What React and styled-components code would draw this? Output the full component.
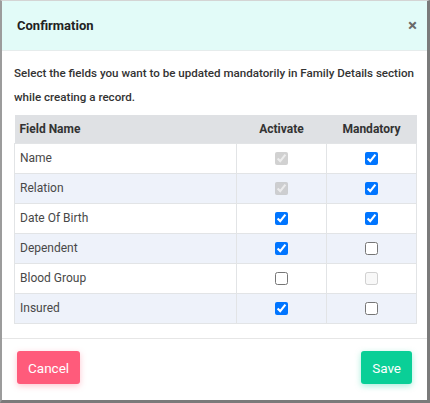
import React from 'react';
import styled, { createGlobalStyle } from 'styled-components';

const GlobalStyle = createGlobalStyle`
	html, body {
		margin: 0;
		padding: 0;
		background: #fff;
	}
	body {
		font-family: Roboto, 'Liberation Sans', sans-serif;
		color: #333;
	}
`;

const Modal = styled.div`
	box-sizing: border-box;
	width: 430px;
	height: 403px;
	background: #fff;
	border-left: 2px solid #9c9c9c;
	border-top: 1px solid #d4d4d4;
	border-right: 3px solid #7a7a7a;
	border-bottom: 3px solid #7a7a7a;
	display: flex;
	flex-direction: column;
`;

const Header = styled.div`
	height: 49px;
	background: #e2fbf8;
	border-bottom: 1px solid #e6ecec;
	display: flex;
	align-items: center;
	justify-content: space-between;
	padding: 0 10px 0 15px;
`;

const Title = styled.h5`
	margin: 0;
	font-size: 13px;
	font-weight: 700;
	color: #222;
`;

const Close = styled.button`
	border: none;
	background: none;
	padding: 0;
	font-family: Roboto, 'Liberation Sans', sans-serif;
	font-size: 17px;
	font-weight: 700;
	color: #6a6a6a;
	line-height: 1;
	cursor: pointer;
`;

const Body = styled.div`
	padding: 10px 12px 14px 12px;
	border-bottom: 1px solid #e6e6e6;
`;

const Intro = styled.p`
	margin: 0 0 6px 0;
	font-size: 11.6px;
	font-weight: 500;
	line-height: 24px;
	color: #333;
`;

const Table = styled.table`
	width: 402px;
	table-layout: fixed;
	border-collapse: collapse;
	font-size: 12px;
`;

const Th = styled.th`
	box-sizing: border-box;
	height: 28px;
	background: #dfe1e4;
	font-weight: 700;
	color: #333;
	text-align: ${({ $left }) => ($left ? 'left' : 'center')};
	padding: 0 0 0 ${({ $left }) => ($left ? '5px' : '0')};
	width: ${({ $w }) => $w};
`;

const Tr = styled.tr`
	background: ${({ $alt }) => ($alt ? '#eef2fa' : '#fff')};
`;

const Td = styled.td`
	height: 29px;
	border: 1px solid #e2e4e6;
	color: #484848;
	text-align: ${({ $left }) => ($left ? 'left' : 'center')};
	padding: 0 0 0 ${({ $left }) => ($left ? '5px' : '0')};
	font-weight: 400;
`;

const Check = styled.input`
	margin: 0;
	width: 13px;
	height: 13px;
	vertical-align: middle;
`;

const Footer = styled.div`
	flex: 1;
	display: flex;
	align-items: center;
	justify-content: space-between;
	padding: 0 15px 3px 15px;
`;

const Btn = styled.button`
	height: 33px;
	border: none;
	border-radius: 3px;
	padding: 0 11px;
	font-family: Roboto, 'Liberation Sans', sans-serif;
	font-size: 13.5px;
	font-weight: 400;
	color: #fff;
	background: ${({ $bg }) => $bg};
	box-shadow: 0 2px 6px ${({ $shadow }) => $shadow};
	cursor: pointer;
`;

const fields = [
	{ name: 'Name', activate: { checked: true, disabled: true }, mandatory: { checked: true } },
	{ name: 'Relation', activate: { checked: true, disabled: true }, mandatory: { checked: true } },
	{ name: 'Date Of Birth', activate: { checked: true }, mandatory: { checked: true } },
	{ name: 'Dependent', activate: { checked: true }, mandatory: { checked: false } },
	{ name: 'Blood Group', activate: { checked: false }, mandatory: { checked: false, disabled: true } },
	{ name: 'Insured', activate: { checked: true }, mandatory: { checked: false } },
];

export default function App() {
	return (
		<>
			<GlobalStyle />
			<Modal>
				<Header>
					<Title>Confirmation</Title>
					<Close>×</Close>
				</Header>
				<Body>
					<Intro>
						Select the fields you want to be updated mandatorily in Family Details section while
						creating a record.
					</Intro>
					<Table>
						<colgroup>
							<col style={{ width: 222 }} />
							<col style={{ width: 90 }} />
							<col style={{ width: 90 }} />
						</colgroup>
						<thead>
							<tr>
								<Th $left>Field Name</Th>
								<Th>Activate</Th>
								<Th>Mandatory</Th>
							</tr>
						</thead>
						<tbody>
							{fields.map((f, i) => (
								<Tr key={f.name} $alt={i % 2 === 1}>
									<Td $left>{f.name}</Td>
									<Td>
										<Check type="checkbox" defaultChecked={f.activate.checked} disabled={f.activate.disabled} />
									</Td>
									<Td>
										<Check type="checkbox" defaultChecked={f.mandatory.checked} disabled={f.mandatory.disabled} />
									</Td>
								</Tr>
							))}
						</tbody>
					</Table>
				</Body>
				<Footer>
					<Btn $bg="#ff5b7b" $shadow="rgba(255, 91, 123, 0.35)">Cancel</Btn>
					<Btn $bg="#0acf97" $shadow="rgba(10, 207, 151, 0.35)">Save</Btn>
				</Footer>
			</Modal>
		</>
	);
}
